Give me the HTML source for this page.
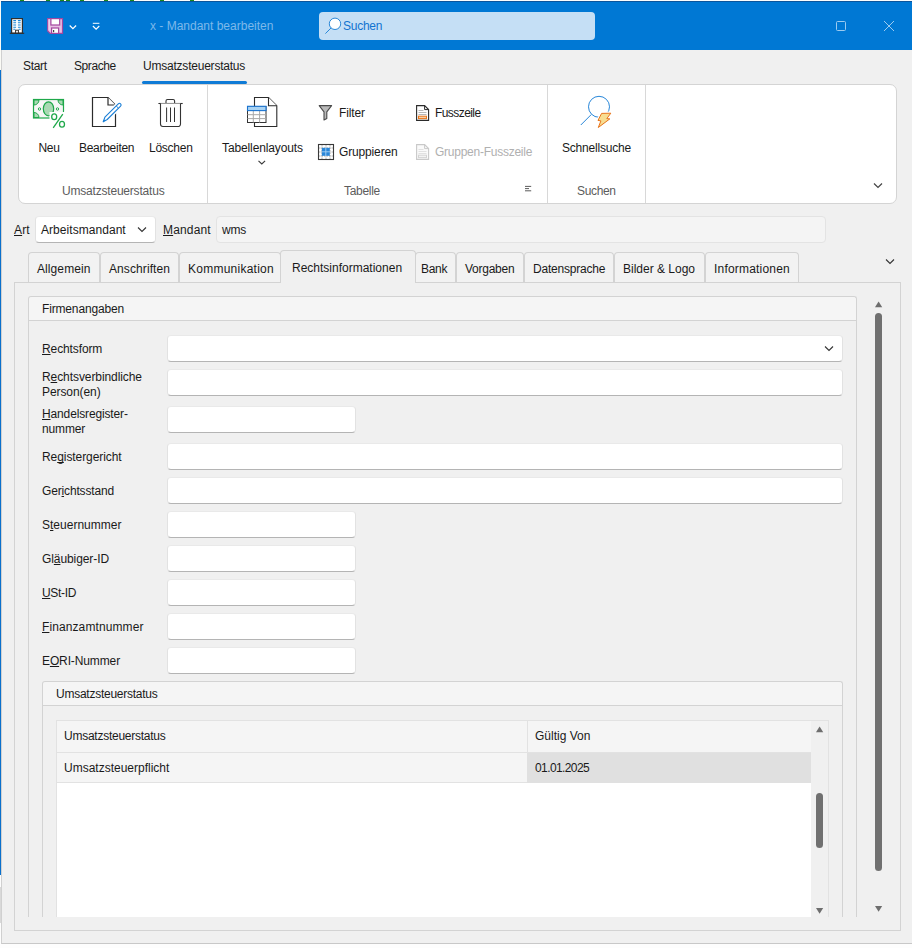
<!DOCTYPE html>
<html lang="de">
<head>
<meta charset="utf-8">
<title>x - Mandant bearbeiten</title>
<style>
*{box-sizing:border-box;margin:0;padding:0}
html,body{width:912px;height:948px;overflow:hidden}
body{position:relative;background:#f0f0f0;font-family:"Liberation Sans",sans-serif;font-size:12px;color:#1a1a1a}
.abs{position:absolute}
.t{position:absolute;white-space:nowrap;line-height:16px;height:16px}
u{text-decoration:underline;text-underline-offset:1px;text-decoration-skip-ink:none;text-decoration-thickness:1px}
.titlebar{left:1px;top:1px;width:911px;height:49px;background:#0078d4;border-top:1px solid #0b559c}
.search{left:319px;top:12px;width:276px;height:28px;background:#c5dff5;border-radius:4px}
.ribbon{left:18px;top:84px;width:879px;height:120px;background:#fff;border:1px solid #d4d4d4;border-radius:7px}
.vsep{width:1px;background:#d8d8d8;top:85px;height:118px}
.grp{color:#5c5c5c}
.dis{color:#b0b0b0}
.inp{position:absolute;background:#fff;border:1px solid #e2e2e2;border-top-color:#e9e9e9;border-bottom-color:#b4b4b4;border-radius:4px;height:27px}
.tab{position:absolute;top:252px;height:31px;background:#f2f2f2;border:1px solid #d3d3d3;border-bottom:none;border-radius:4px 4px 0 0}
.tab.act{top:250px;height:33px;background:#f0f0f0;z-index:3}
.box{position:absolute;border:1px solid #d3d3d3}
.hdr{position:absolute;background:#f5f5f5;border-bottom:1px solid #d3d3d3}
</style>
</head>
<body>
<!-- desktop bleed at very top/left -->
<div class="abs" style="left:0;top:0;width:912px;height:1px;background:#fcfcfc"></div>
<div class="abs" style="left:20px;top:0;width:4px;height:1px;background:#1c8a1c;box-shadow:26px 0 #1c8a1c,40px 0 #1c8a1c,46px 0 #1c8a1c,60px 0 #1c8a1c,84px 0 #1c8a1c,110px 0 #1c8a1c,140px 0 #1c8a1c,170px 0 #1c8a1c"></div>
<div class="abs" style="left:0;top:1px;width:1px;height:69px;background:#fbfbf6"></div>
<div class="abs" style="left:0;top:70px;width:1px;height:805px;background:#0a70cc"></div>
<div class="abs" style="left:0;top:875px;width:1px;height:12px;background:#fcfcfc"></div>
<div class="abs" style="left:0;top:887px;width:1px;height:36px;background:#d9d9d9"></div>
<div class="abs" style="left:0;top:923px;width:1px;height:25px;background:#fdfdfd"></div>
<div class="abs" style="left:0;top:944px;width:912px;height:4px;background:#fdfdfd"></div>

<!-- window frame -->
<div class="abs" style="left:1px;top:50px;width:911px;height:894px;border-left:1px solid #d0d0d0;border-bottom:1px solid #c8c8c8"></div>

<!-- title bar -->
<div class="abs titlebar"></div>
<svg class="abs" style="left:9px;top:17px" width="16" height="18" viewBox="0 0 16 18">
  <rect x="2.600" y="1.600" width="10.800" height="14.600" fill="#fff" stroke="#2f2f2f" stroke-width="1.200"/>
  <path d="M4.300 3.600h2.800M8.900 3.600h2.800M4.300 5.800h2.800M8.900 5.800h2.800M4.300 8h2.800M8.900 8h2.800M4.300 10.200h2.800M8.900 10.200h2.800M4.300 12.200h2M9.700 12.200h2" stroke="#1a86d6" stroke-width="1.100"/>
  <rect x="6.600" y="13.200" width="2.800" height="3" fill="#fff" stroke="#2f2f2f" stroke-width="1"/>
  <path d="M0.800 16.300h14.400" stroke="#2f2f2f" stroke-width="1.200"/>
</svg>
<svg class="abs" style="left:47px;top:17px" width="17" height="18" viewBox="0 0 17 18">
  <path d="M0.700 1.600h14.800v14.800H3.200L0.700 13.900z" fill="#e8bfe3" stroke="#a3479f" stroke-width="1.200"/>
  <path d="M2.100 2.200v11" stroke="#f3dcf0" stroke-width="1"/>
  <rect x="3.900" y="1.600" width="8.800" height="6.400" fill="#fff" stroke="#a3479f" stroke-width="1.200"/>
  <rect x="4.600" y="11" width="7" height="5.400" fill="#fff" stroke="#a3479f" stroke-width="1.200"/>
  <rect x="6" y="13" width="1.200" height="2.200" fill="#444"/>
</svg>
<svg class="abs" style="left:68px;top:22.500px" width="10" height="8" viewBox="0 0 10 8"><path d="M1.700 2.500l3.200 3.200 3.200-3.200" fill="none" stroke="#fff" stroke-width="1.200"/></svg>
<svg class="abs" style="left:91px;top:21px" width="10" height="11" viewBox="0 0 10 11"><path d="M1.800 2.300h6.600" stroke="#fff" stroke-width="1"/><path d="M1.900 5l3.200 3.100L8.300 5" fill="none" stroke="#fff" stroke-width="1.200"/></svg>
<div class="t" style="left:150px;top:18px;color:#7db9ea">x - Mandant bearbeiten</div>
<div class="abs search"></div>
<svg class="abs" style="left:324px;top:16px" width="18" height="20" viewBox="0 0 18 20"><circle cx="11" cy="7.800" r="5.700" fill="#fff" stroke="#2a88d8" stroke-width="1"/><path d="M7 12L1.400 17.600" stroke="#2a88d8" stroke-width="1"/></svg>
<div class="t" style="left:343px;top:18px;color:#1273d0;letter-spacing:-0.250px">Suchen</div>
<svg class="abs" style="left:835px;top:20px" width="12" height="12" viewBox="0 0 12 12"><rect x="1.5" y="1.5" width="9" height="9" rx="1" fill="none" stroke="#9ccbf0" stroke-width="1"/></svg>
<svg class="abs" style="left:882px;top:19px" width="14" height="14" viewBox="0 0 14 14"><path d="M2 2l10 10M12 2l-10 10" stroke="#9ccbf0" stroke-width="1"/></svg>

<!-- ribbon tabs -->
<div class="t" style="left:23px;top:58px;letter-spacing:-0.33px">Start</div>
<div class="t" style="left:74px;top:58px;letter-spacing:-0.43px">Sprache</div>
<div class="t" style="left:143px;top:58px;letter-spacing:-0.22px">Umsatzsteuerstatus</div>
<div class="abs" style="left:142px;top:81px;width:105px;height:3px;background:#0f7bd6;border-radius:1.5px"></div>

<!-- ribbon -->
<div class="abs ribbon"></div>
<div class="abs vsep" style="left:207px"></div>
<div class="abs vsep" style="left:547px"></div>
<div class="abs vsep" style="left:645px"></div>
<!-- Neu icon -->
<svg class="abs" style="left:32px;top:97px" width="34" height="32" viewBox="0 0 34 32">
  <rect x="1.500" y="2.500" width="30" height="18.500" fill="#f6f6f6" stroke="#1fa84a" stroke-width="1.200"/>
  <path d="M2 3h5a5 5 0 0 1-5 5zM31 3h-5a5 5 0 0 0 5 5zM2 20.500h5a5 5 0 0 0-5-5z" fill="#a9d9b3" stroke="#1fa84a" stroke-width="1"/>
  <ellipse cx="16.500" cy="11.800" rx="5.200" ry="7" fill="#a9d9b3" stroke="#1fa84a" stroke-width="1.200"/>
  <circle cx="7.500" cy="12" r="1.200" fill="#fff" stroke="#1fa84a" stroke-width="1"/>
  <circle cx="25.500" cy="12" r="1.200" fill="#fff" stroke="#1fa84a" stroke-width="1"/>
  <path d="M17.500 15h15.500v17h-15.500z" fill="#fff"/>
  <path d="M32 14.500h2v8h-2z" fill="#fff"/>
  <ellipse cx="22.200" cy="19.800" rx="2.500" ry="2.900" fill="none" stroke="#1fa84a" stroke-width="1.300"/>
  <ellipse cx="30" cy="27.300" rx="2.500" ry="2.900" fill="none" stroke="#1fa84a" stroke-width="1.300"/>
  <path d="M30.800 17.200L21.200 30.800" stroke="#1fa84a" stroke-width="1.300"/>
</svg>
<div class="t" style="left:38.500px;top:140px;letter-spacing:-0.34px">Neu</div>
<!-- Bearbeiten icon -->
<svg class="abs" style="left:90px;top:95px" width="34" height="34" viewBox="0 0 34 34">
  <path d="M2.500 2.500h15.500l7.500 7.500v21.500h-23z" fill="#fff" stroke="#2b2b2b" stroke-width="1.200"/>
  <path d="M18 2.500v7.500h7.500" fill="#fff" stroke="#2b2b2b" stroke-width="1.200"/>
  <path d="M13.200 26.800l1.700-4.600L28.300 8.800a1.600 1.600 0 0 1 2.300 2.300L17.200 24.500z" fill="#fff" stroke="#fff" stroke-width="4" stroke-linejoin="round"/>
  <path d="M13.200 26.800l1.700-4.600L28.300 8.800a1.600 1.600 0 0 1 2.300 2.300L17.200 24.500z" fill="#fff" stroke="#1b7fd6" stroke-width="1.100" stroke-linejoin="round"/>
  <path d="M26.200 10.900l2.300 2.300" stroke="#1b7fd6" stroke-width="1"/>
  <path d="M13.200 26.800l2.200-1-1.200-1.200z" fill="#1b7fd6"/>
</svg>
<div class="t" style="left:79px;top:140px;letter-spacing:-0.28px">Bearbeiten</div>
<!-- Löschen icon -->
<svg class="abs" style="left:157px;top:97px" width="28" height="31" viewBox="0 0 28 31">
  <path d="M1.400 6.500h24.300" stroke="#333" stroke-width="1.100"/>
  <path d="M9 6.500v-2.500a1.500 1.500 0 0 1 1.500-1.500h5.600a1.500 1.500 0 0 1 1.500 1.500v2.500" fill="none" stroke="#333" stroke-width="1.100"/>
  <path d="M3.500 6.500v20.500a2.500 2.500 0 0 0 2.500 2.500h15a2.500 2.500 0 0 0 2.500-2.500v-20.500" fill="#fff" stroke="#333" stroke-width="1.100"/>
  <path d="M9.600 10.500v14.500M13.500 10.500v14.500M17.500 10.500v14.500" stroke="#333" stroke-width="1"/>
</svg>
<div class="t" style="left:149px;top:140px;letter-spacing:-0.250px">Löschen</div>
<div class="t grp" style="left:62px;top:183px;letter-spacing:-0.200px">Umsatzsteuerstatus</div>

<!-- Tabellenlayouts icon -->
<svg class="abs" style="left:246px;top:96px" width="33" height="32" viewBox="0 0 33 32">
  <path d="M8.500 1.500h14l8.300 8.300v20.700h-22.300z" fill="#fff" stroke="#2b2b2b" stroke-width="1.100"/>
  <path d="M22.500 1.500v8.300h8.300" fill="#fff" stroke="#2b2b2b" stroke-width="1.100"/>
  <rect x="1.500" y="10.500" width="18.500" height="16" fill="#fff" stroke="#333" stroke-width="1"/>
  <path d="M1.500 18.700h18.500M1.500 22.600h18.500M7.300 14.500v12M13.600 14.500v12" stroke="#a8a8a8" stroke-width="1"/>
  <rect x="1.500" y="10.300" width="18.500" height="4.300" fill="#a9d3f3" stroke="#1b74d0" stroke-width="1.100"/>
</svg>
<div class="t" style="left:222px;top:140px;letter-spacing:-0.12px">Tabellenlayouts</div>
<svg class="abs" style="left:257px;top:159px" width="10" height="7" viewBox="0 0 10 7"><path d="M1.500 1.800l3.300 3.200 3.300-3.200" fill="none" stroke="#3a3a3a" stroke-width="1.100"/></svg>
<!-- Filter -->
<svg class="abs" style="left:317px;top:104px" width="17" height="18" viewBox="0 0 17 18">
  <path d="M2.200 1.600h12.400l-4.800 6.200v6.600l-2.800 1.500v-8.100z" fill="#b9b9b9" stroke="#4a4a4a" stroke-width="1.100" stroke-linejoin="round"/>
</svg>
<div class="t" style="left:339px;top:105px;letter-spacing:-0.11px">Filter</div>
<!-- Gruppieren -->
<svg class="abs" style="left:317px;top:143px" width="18" height="18" viewBox="0 0 18 18">
  <rect x="1.500" y="1.500" width="15" height="15" fill="#fff" stroke="#3a3a3a" stroke-width="1.100"/>
  <path d="M5 2v14M9 2v14M13 2v14M2 5h14M2 9h14M2 13h14" stroke="#9a9a9a" stroke-width="0.800" stroke-dasharray="1.500 1"/>
  <rect x="4.800" y="4.800" width="8" height="8" fill="#2a86d8"/>
  <path d="M8.800 5v8M5 8.800h8" stroke="#a6d2f5" stroke-width="0.900"/>
</svg>
<div class="t" style="left:339px;top:144px;letter-spacing:-0.15px">Gruppieren</div>
<!-- Fusszeile -->
<svg class="abs" style="left:415px;top:104px" width="15" height="18" viewBox="0 0 15 18">
  <path d="M1.600 1.600h8l4 4v10.800h-12z" fill="#fff" stroke="#2b2b2b" stroke-width="1.100"/>
  <path d="M9.600 1.600v4h4" fill="none" stroke="#2b2b2b" stroke-width="1"/>
  <path d="M3.500 6.500h5M3.500 8.500h8M3.500 10.500h8" stroke="#b0b0b0" stroke-width="0.900"/>
  <rect x="3.500" y="12.200" width="8" height="2.400" fill="#f9cfa4" stroke="#e8761a" stroke-width="1"/>
</svg>
<div class="t" style="left:435px;top:105px;letter-spacing:-0.57px">Fusszeile</div>
<!-- Gruppen-Fusszeile -->
<svg class="abs" style="left:415px;top:143px" width="15" height="18" viewBox="0 0 15 18">
  <path d="M1.600 1.600h8l4 4v10.800h-12z" fill="#fafafa" stroke="#c9c9c9" stroke-width="1.100"/>
  <path d="M9.600 1.600v4h4" fill="none" stroke="#c9c9c9" stroke-width="1"/>
  <path d="M3.500 6.500h5M3.500 8.500h8M3.500 10.500h8" stroke="#dedede" stroke-width="0.900"/>
  <rect x="3.500" y="12.200" width="8" height="2.400" fill="#f3f3f3" stroke="#d4d4d4" stroke-width="1"/>
</svg>
<div class="t dis" style="left:435px;top:144px;letter-spacing:-0.250px">Gruppen-Fusszeile</div>
<div class="t grp" style="left:344px;top:183px;letter-spacing:-0.29px">Tabelle</div>
<svg class="abs" style="left:524px;top:185px" width="8" height="7" viewBox="0 0 8 7"><path d="M1 1.400h6.200M1 3.600h4M1 5.800h6.200" stroke="#4a4a4a" stroke-width="0.900"/></svg>
<!-- Schnellsuche -->
<svg class="abs" style="left:579px;top:94px" width="34" height="36" viewBox="0 0 34 36">
  <circle cx="20" cy="12.800" r="10.500" fill="#fff" stroke="#1b7fd6" stroke-width="0.950"/>
  <path d="M12.300 20.500L1.800 31" stroke="#1b7fd6" stroke-width="0.950"/>
  <path d="M22.600 19.400L31.800 19.200L27.800 24.600L30.800 24.900L19.300 33.500L21.900 26.900L19 26.400Z" fill="#fff" stroke="#fff" stroke-width="3.200" stroke-linejoin="round"/>
  <path d="M22.600 19.400L31.800 19.200L27.800 24.600L30.800 24.900L19.300 33.500L21.900 26.900L19 26.400Z" fill="#f7dd91" stroke="#e8731a" stroke-width="1" stroke-linejoin="round"/>
</svg>
<div class="t" style="left:562px;top:140px;letter-spacing:-0.200px">Schnellsuche</div>
<div class="t grp" style="left:577px;top:183px;letter-spacing:-0.350px">Suchen</div>
<svg class="abs" style="left:872px;top:180.700px" width="12" height="9" viewBox="0 0 12 9"><path d="M2 2.500l4 4 4-4" fill="none" stroke="#444" stroke-width="1.200"/></svg>


<!-- Art / Mandant row -->
<div class="t" style="left:14px;top:222px;letter-spacing:0.13px"><u>A</u>rt</div>
<div class="inp" style="left:35px;top:216px;width:121px;height:27px"></div>
<div class="t" style="left:41px;top:222px;letter-spacing:0.05px">Arbeitsmandant</div>
<svg class="abs" style="left:136px;top:225px" width="12" height="9" viewBox="0 0 12 9"><path d="M2 2.500l4 4 4-4" fill="none" stroke="#333" stroke-width="1.100"/></svg>
<div class="t" style="left:163px;top:222px;letter-spacing:0.15px"><u>M</u>andant</div>
<div class="abs" style="left:216px;top:216px;width:610px;height:27px;background:#f4f4f4;border:1px solid #e3e3e3;border-radius:4px"></div>
<div class="t" style="left:222px;top:222px;letter-spacing:-0.22px">wms</div>

<!-- tab strip -->
<div class="tab" style="left:28px;width:72px"></div>
<div class="tab" style="left:100px;width:79px"></div>
<div class="tab" style="left:179px;width:102px"></div>
<div class="tab" style="left:415px;width:41px"></div>
<div class="tab" style="left:456px;width:68px"></div>
<div class="tab" style="left:524px;width:90px"></div>
<div class="tab" style="left:614px;width:91px"></div>
<div class="tab" style="left:705px;width:94px"></div>
<div class="t" style="left:37px;top:261px;letter-spacing:0.09px">Allgemein</div>
<div class="t" style="left:109px;top:261px;letter-spacing:0.09px">Anschriften</div>
<div class="t" style="left:188px;top:261px;letter-spacing:0.250px">Kommunikation</div>
<div class="t" style="left:421px;top:261px;letter-spacing:-0.28px">Bank</div>
<div class="t" style="left:465px;top:261px;letter-spacing:-0.250px">Vorgaben</div>
<div class="t" style="left:533px;top:261px;letter-spacing:-0.200px">Datensprache</div>
<div class="t" style="left:623px;top:261px">Bilder &amp; Logo</div>
<div class="t" style="left:714px;top:261px;letter-spacing:0.200px">Informationen</div>
<svg class="abs" style="left:884px;top:256.700px" width="12" height="9" viewBox="0 0 12 9"><path d="M2 2.500l4 4 4-4" fill="none" stroke="#333" stroke-width="1.100"/></svg>

<!-- tab page -->
<div class="box" style="left:14px;top:282px;width:887px;height:649px;z-index:2"></div>
<div class="tab act" style="left:280px;width:136px"></div>
<div class="t" style="left:292px;top:260px;z-index:4">Rechtsinformationen</div>

<!-- Firmenangaben group -->
<div class="box" style="left:28px;top:296px;width:829px;height:621px;border-bottom:none;border-radius:3px 3px 0 0"></div>
<div class="hdr" style="left:29px;top:297px;width:827px;height:24px;border-radius:3px 3px 0 0"></div>
<div class="t" style="left:42px;top:301px;letter-spacing:-0.16px">Firmenangaben</div>

<div class="t" style="left:42px;top:341px;letter-spacing:-0.11px"><u>R</u>echtsform</div>
<div class="inp" style="left:167px;top:335px;width:676px"></div>
<svg class="abs" style="left:823px;top:343.500px" width="12" height="9" viewBox="0 0 12 9"><path d="M2 2.500l4 4 4-4" fill="none" stroke="#333" stroke-width="1.100"/></svg>
<div class="t" style="left:42px;top:370px;line-height:15px;height:30px;letter-spacing:-0.08px">R<u>e</u>chtsverbindliche<br>Person(en)</div>
<div class="inp" style="left:167px;top:369px;width:676px"></div>
<div class="t" style="left:42px;top:407px;line-height:15px;height:30px;letter-spacing:-0.14px"><u>H</u>andelsregister-<br>nummer</div>
<div class="inp" style="left:167px;top:406px;width:189px"></div>
<div class="t" style="left:42px;top:449px;letter-spacing:-0.08px">Re<u>g</u>istergericht</div>
<div class="inp" style="left:167px;top:443px;width:676px"></div>
<div class="t" style="left:42px;top:483px;letter-spacing:-0.16px">Ger<u>i</u>chtsstand</div>
<div class="inp" style="left:167px;top:477px;width:676px"></div>
<div class="t" style="left:42px;top:517px">S<u>t</u>euernummer</div>
<div class="inp" style="left:167px;top:511px;width:189px"></div>
<div class="t" style="left:42px;top:551px;letter-spacing:-0.09px">Gl<u>ä</u>ubiger-ID</div>
<div class="inp" style="left:167px;top:545px;width:189px"></div>
<div class="t" style="left:42px;top:585px;letter-spacing:-0.34px"><u>U</u>St-ID</div>
<div class="inp" style="left:167px;top:579px;width:189px"></div>
<div class="t" style="left:42px;top:619px;letter-spacing:0.10px"><u>F</u>inanzamtnummer</div>
<div class="inp" style="left:167px;top:613px;width:189px"></div>
<div class="t" style="left:42px;top:653px;letter-spacing:-0.12px">E<u>O</u>RI-Nummer</div>
<div class="inp" style="left:167px;top:647px;width:189px"></div>

<!-- Umsatzsteuerstatus group -->
<div class="box" style="left:42px;top:681px;width:801px;height:236px;border-bottom:none;border-radius:3px 3px 0 0"></div>
<div class="hdr" style="left:43px;top:682px;width:799px;height:24px;border-radius:3px 3px 0 0"></div>
<div class="t" style="left:56px;top:686px;letter-spacing:-0.250px">Umsatzsteuerstatus</div>

<!-- grid -->
<div class="abs" style="left:56px;top:720px;width:773px;height:197px;background:#fff;border:1px solid #e2e2e2;border-bottom:none"></div>
<div class="abs" style="left:57px;top:721px;width:754px;height:32px;background:#f5f5f5;border-bottom:1px solid #e2e2e2"></div>
<div class="abs" style="left:57px;top:753px;width:470px;height:30px;background:#f5f5f5;border-bottom:1px solid #e2e2e2"></div>
<div class="abs" style="left:527px;top:753px;width:284px;height:30px;background:#e0e0e0"></div>
<div class="abs" style="left:527px;top:721px;width:1px;height:31px;background:#e2e2e2"></div>
<div class="abs" style="left:811px;top:721px;width:17px;height:196px;background:#f0f0f0"></div>
<div class="t" style="left:64px;top:728px;letter-spacing:-0.250px">Umsatzsteuerstatus</div>
<div class="t" style="left:535px;top:728px">Gültig Von</div>
<div class="t" style="left:64px;top:760px">Umsatzsteuerpflicht</div>
<div class="t" style="left:535px;top:760px;letter-spacing:-0.600px">01.01.2025</div>
<svg class="abs" style="left:815px;top:725px" width="10" height="8" viewBox="0 0 10 8"><path d="M1 7.200l3.600-5.800 3.600 5.800z" fill="#6e6e6e"/></svg>
<div class="abs" style="left:816px;top:793px;width:7px;height:55px;background:#707070;border-radius:3.500px"></div>
<svg class="abs" style="left:815px;top:907px" width="10" height="8" viewBox="0 0 10 8"><path d="M1 1l3.600 5.800 3.600-5.800z" fill="#6e6e6e"/></svg>

<!-- outer scrollbar -->
<svg class="abs" style="left:874px;top:299.500px" width="10" height="8" viewBox="0 0 10 8"><path d="M1 7.200l3.600-5.800 3.600 5.800z" fill="#6e6e6e"/></svg>
<div class="abs" style="left:875px;top:313px;width:7px;height:558px;background:#707070;border-radius:3.500px"></div>
<svg class="abs" style="left:874px;top:905px" width="10" height="8" viewBox="0 0 10 8"><path d="M1 1l3.600 5.800 3.600-5.800z" fill="#6e6e6e"/></svg>

<!-- clip strip below content -->
<div class="abs" style="left:15px;top:917px;width:885px;height:12px;background:#f0f0f0;z-index:1"></div>

</body>
</html>
